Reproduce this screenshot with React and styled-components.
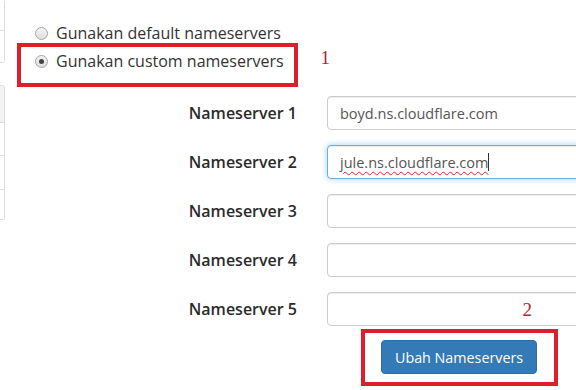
import React from 'react';
import styled, { createGlobalStyle, css } from 'styled-components';

const GlobalStyle = createGlobalStyle`
  html, body {
    margin: 0;
    padding: 0;
    background: #fff;
  }
  body {
    font-family: 'Open Sans', 'Liberation Sans', sans-serif;
    color: #333;
  }
`;

const Page = styled.div`
  display: flex;
  width: 576px;
  height: 390px;
  overflow: hidden;
`;

const Sidebar = styled.div`
  flex: none;
  width: 5px;
  display: flex;
  flex-direction: column;
  gap: 22px;
`;

const SideBox = styled.div`
  border: 1px solid #ddd;
  border-left: none;
  border-top: ${(p) => (p.$open ? 'none' : '1px solid #ddd')};
  border-radius: 0 3px 3px 0;
`;

const SideItem = styled.div`
  height: ${(p) => p.$h}px;
  background: ${(p) => (p.$active ? '#f2f2f2' : '#fff')};
  & + & {
    border-top: 1px solid #ddd;
  }
`;

const Main = styled.div`
  flex: 1;
  padding-top: 19px;
`;

const RadioGroup = styled.div`
  padding-left: 30px;
  display: flex;
  flex-direction: column;
  align-items: flex-start;
`;

const RadioRow = styled.label`
  display: inline-flex;
  align-items: center;
  gap: 8px;
  height: 28px;
  font-size: 16px;
  color: #333;
`;

const Radio = styled.span`
  box-sizing: border-box;
  width: 13px;
  height: 13px;
  border-radius: 50%;
  border: 1px solid #a6a6a6;
  background: linear-gradient(#f4f4f4, #dedede);
  display: flex;
  align-items: center;
  justify-content: center;
  ${(p) =>
    p.$checked &&
    css`
      &::after {
        content: '';
        width: 5px;
        height: 5px;
        border-radius: 50%;
        background: #444;
      }
    `}
`;

const Marked = styled.div`
  position: relative;
  display: inline-flex;
`;

const Frame = styled.span`
  position: absolute;
  top: ${(p) => p.$t}px;
  right: ${(p) => p.$r}px;
  bottom: ${(p) => p.$b}px;
  left: ${(p) => p.$l}px;
  border: 4px solid #dc1f2a;
  pointer-events: none;
`;

const Mark = styled.span`
  position: absolute;
  top: ${(p) => p.$t}px;
  ${(p) => (p.$side === 'right' ? `right: ${p.$x}px;` : `left: calc(100% + ${p.$x}px);`)}
  font-family: 'Liberation Serif', 'DejaVu Serif', serif;
  font-size: 19px;
  line-height: 20px;
  color: #a8283b;
`;

const Form = styled.div`
  margin-top: 21px;
  display: grid;
  grid-template-columns: 292px 1fr;
  column-gap: 30px;
  row-gap: 15px;
  align-items: center;
`;

const Label = styled.div`
  text-align: right;
  font-size: 16px;
  font-weight: 600;
  color: #2b2b2b;
`;

const Field = styled.div`
  box-sizing: border-box;
  width: 300px;
  height: 34px;
  padding: 0 12px;
  display: flex;
  align-items: center;
  font-size: 14.5px;
  color: #555;
  background: #fff;
  border: 1px solid #ccc;
  border-radius: 4px;
  box-shadow: inset 0 1px 1px rgba(0, 0, 0, 0.075);
  ${(p) =>
    p.$focus &&
    css`
      border-color: #66afe9;
      box-shadow: inset 0 1px 1px rgba(0, 0, 0, 0.075), 0 0 6px rgba(102, 175, 233, 0.6);
    `}
`;

const Misspelled = styled.span`
  text-decoration: underline wavy #e0202a;
  text-decoration-thickness: 1px;
  text-underline-offset: 3px;
`;

const Caret = styled.span`
  display: inline-block;
  width: 1px;
  height: 18px;
  background: #333;
`;

const Actions = styled.div`
  grid-column: 2;
  padding-left: 54px;
  margin-top: -1px;
`;

const Button = styled.button`
  box-sizing: border-box;
  height: 34px;
  padding: 0 13px;
  font-family: inherit;
  font-size: 14.3px;
  color: #fff;
  background: #337ab7;
  border: 1px solid #2e6da4;
  border-radius: 4px;
`;

const servers = ['boyd.ns.cloudflare.com', 'jule.ns.cloudflare.com', '', '', ''];

export default function App() {
  return (
    <Page>
      <GlobalStyle />
      <Sidebar>
        <SideBox $open>
          <SideItem $h={30} />
          <SideItem $h={31} />
        </SideBox>
        <SideBox>
          <SideItem $h={36} $active />
          <SideItem $h={32} />
          <SideItem $h={33} />
          <SideItem $h={29} />
        </SideBox>
      </Sidebar>
      <Main>
        <RadioGroup>
          <RadioRow>
            <Radio />
            Gunakan default nameservers
          </RadioRow>
          <Marked>
            <RadioRow>
              <Radio $checked />
              Gunakan custom nameservers
            </RadioRow>
            <Frame $t={-4} $r={-14} $b={-12} $l={-18}>
              <Mark $t={1} $x={27}>1</Mark>
            </Frame>
          </Marked>
        </RadioGroup>
        <Form>
          {servers.map((value, i) => (
            <React.Fragment key={i}>
              <Label>Nameserver {i + 1}</Label>
              {i === 1 ? (
                <Field $focus>
                  <Misspelled>{value}</Misspelled>
                  <Caret />
                </Field>
              ) : (
                <Field>{value}</Field>
              )}
            </React.Fragment>
          ))}
          <Actions>
            <Marked>
              <Button type="button">Ubah Nameservers</Button>
              <Frame $t={-11} $r={-21} $b={-12} $l={-20}>
                <Mark $t={-33} $x={22} $side="right">2</Mark>
              </Frame>
            </Marked>
          </Actions>
        </Form>
      </Main>
    </Page>
  );
}
